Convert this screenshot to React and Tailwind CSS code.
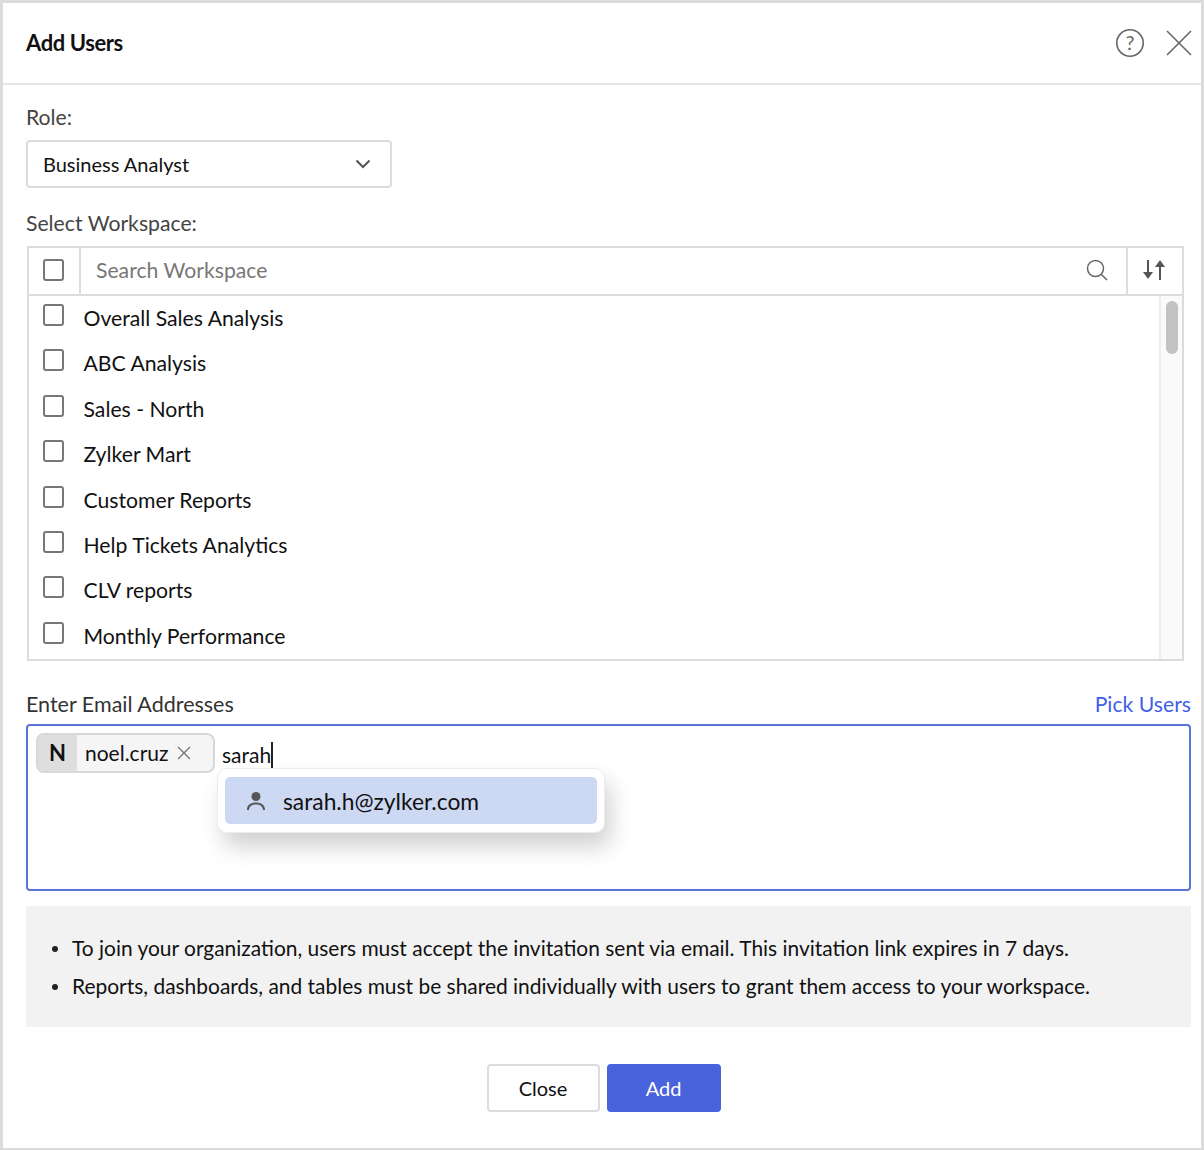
const WORKSPACES = [
  'Overall Sales Analysis',
  'ABC Analysis',
  'Sales - North',
  'Zylker Mart',
  'Customer Reports',
  'Help Tickets Analytics',
  'CLV reports',
  'Monthly Performance',
]

function Checkbox({ className = '' }) {
  return <span className={`block w-[21px] h-[22px] rounded-[3px] border-2 border-[#777] bg-white shrink-0 ${className}`} />
}

export default function App() {
  return (
    <div className="w-[1204px] h-[1150px] bg-white border-t-[3px] border-l-[3px] border-r-[3px] border-b-[2px] border-[#dcdcdc] text-[21.2px] leading-[28px] text-[#111] font-['Lato','Noto_Sans',sans-serif] overflow-hidden">
      {/* header */}
      <div className="h-[82px] border-b-2 border-[#e6e6e6] flex items-center pl-[23px] pr-[9px]">
        <h2 className="text-[22px] font-bold flex-1 tracking-[-0.4px]">Add Users</h2>
        <svg width="30" height="30" viewBox="0 0 30 30" fill="none" className="mr-[21px] text-[#666]">
          <circle cx="15" cy="15" r="13.2" stroke="currentColor" strokeWidth="1.6" />
          <text x="15" y="22" textAnchor="middle" fontSize="20" fill="currentColor" fontFamily="Lato">?</text>
        </svg>
        <svg width="26" height="26" viewBox="0 0 26 26" fill="none" stroke="#666" strokeWidth="1.6">
          <path d="M1 1 L25 25 M25 1 L1 25" />
        </svg>
      </div>

      <div className="pl-[23px] pr-[10px]">
        <div className="pt-[18px] text-[#444]">Role:</div>
        <div className="mt-[9px] w-[366px] h-[48px] border-2 border-[#dcdcdc] rounded-[4px] flex items-center pl-[15px] pr-[19px] text-[20px]">
          <span className="flex-1 -mt-[1px]">Business Analyst</span>
          <svg width="16" height="10" viewBox="0 0 16 10" fill="none" stroke="#555" strokeWidth="2">
            <path d="M1.5 1.5 L8 8 L14.5 1.5" />
          </svg>
        </div>

        <div className="mt-[21px] text-[#444]">Select Workspace:</div>

        {/* workspace table */}
        <div className="mt-[9px] w-[1157px] ml-[1px] border-2 border-[#dcdcdc]">
          <div className="h-[48px] border-b-2 border-[#dcdcdc] flex items-stretch">
            <div className="w-[52px] border-r-2 border-[#dcdcdc] flex items-center pl-[14px] pb-[2px]">
              <Checkbox />
            </div>
            <div className="flex-1 flex items-center pl-[15px] pr-[18px] pb-[2px] text-[#777]">
              <span className="flex-1">Search Workspace</span>
              <svg width="22" height="22" viewBox="0 0 22 22" fill="none" stroke="#666" strokeWidth="1.5">
                <circle cx="9.5" cy="9.5" r="8" />
                <path d="M15.5 15.5 L21 21" />
              </svg>
            </div>
            <div className="w-[56px] border-l-2 border-[#dcdcdc] flex items-center justify-center pr-[2px] pb-[2px]">
              <svg width="24" height="22" viewBox="0 0 24 22" fill="#555" stroke="none">
                <rect x="5" y="1" width="2" height="15" />
                <path d="M1 13 H11 L6 20 Z" />
                <rect x="17" y="6" width="2" height="15" />
                <path d="M13 8 H23 L18 1 Z" />
              </svg>
            </div>
          </div>
          <div className="h-[363px] flex overflow-hidden">
            <div className="flex-1 pl-[14px]">
              {WORKSPACES.map(name => (
                <div key={name} className="h-[45.4px] flex items-start pt-[8px]">
                  <Checkbox />
                  <span className="ml-[19.5px]">{name}</span>
                </div>
              ))}
            </div>
            <div className="w-[23px] border-l-2 border-[#ececec] bg-[#fafafa] pt-[5px] pl-[5px]">
              <div className="w-[12px] h-[53px] rounded-full bg-[#c2c2c2]" />
            </div>
          </div>
        </div>

        {/* email */}
        <div className="mt-[29px] flex justify-between">
          <span className="text-[#333] text-[21.5px]">Enter Email Addresses</span>
          <span className="text-[#3f5fe8]">Pick Users</span>
        </div>
        <div className="relative mt-[6px] h-[167px] border-2 border-[#5a75d8] rounded-[4px] pt-[7px] pl-[8px] flex items-start text-[21px]">
          <div className="h-[40px] w-[179px] rounded-[8px] border-2 border-[#d8d8d8] bg-[#f5f5f5] flex items-stretch overflow-hidden">
            <span className="w-[39px] bg-[#dedede] flex items-center justify-center font-bold text-[22px]">N</span>
            <span className="ml-[8px] flex items-center">noel.cruz</span>
            <svg width="14" height="14" viewBox="0 0 14 14" fill="none" stroke="#777" strokeWidth="1.4" className="ml-[8px] mt-[11px]">
              <path d="M1 1 L13 13 M13 1 L1 13" />
            </svg>
          </div>
          <span className="ml-[7px] mt-[9px] border-r-2 border-[#222] leading-[26px] h-[26px]">sarah</span>

          <div className="absolute left-[189px] top-[42px] w-[388px] h-[65px] bg-white border border-[#ececec] rounded-[10px] pl-[7px] pr-[7px] py-[8px] shadow-[6px_14px_22px_rgba(0,0,0,0.18)]">
            <div className="h-[47px] bg-[#cdd8f3] rounded-[5px] flex items-center pl-[21px]">
              <svg width="20" height="20" viewBox="0 0 20 20" fill="#555">
                <circle cx="10" cy="5.5" r="4.5" />
                <path d="M1 19 C1 13.5 5 11.5 10 11.5 C15 11.5 19 13.5 19 19 L17 19 C17 15.5 14 13.5 10 13.5 C6 13.5 3 15.5 3 19 Z" />
              </svg>
              <span className="ml-[17px] text-[22.8px]">sarah.h@zylker.com</span>
            </div>
          </div>
        </div>

        {/* notes */}
        <div className="mt-[15px] h-[121px] bg-[#f2f2f2] pl-[46px] flex flex-col justify-center gap-[10px] text-[20.95px]">
          <div className="relative">
            <span className="absolute left-[-20px] top-[12px] w-[6px] h-[6px] rounded-full bg-[#222]" />
            To join your organization, users must accept the invitation sent via email. This invitation link expires in 7 days.
          </div>
          <div className="relative">
            <span className="absolute left-[-20px] top-[12px] w-[6px] h-[6px] rounded-full bg-[#222]" />
            Reports, dashboards, and tables must be shared individually with users to grant them access to your workspace.
          </div>
        </div>

        {/* actions */}
        <div className="mt-[37px] flex justify-center gap-[7px] pr-[10px] text-[20px]">
          <button className="w-[113px] h-[48px] bg-white border-2 border-[#dcdcdc] rounded-[4px]">Close</button>
          <button className="w-[114px] h-[48px] bg-[#4a63dc] text-white rounded-[4px]">Add</button>
        </div>
      </div>
    </div>
  )
}
